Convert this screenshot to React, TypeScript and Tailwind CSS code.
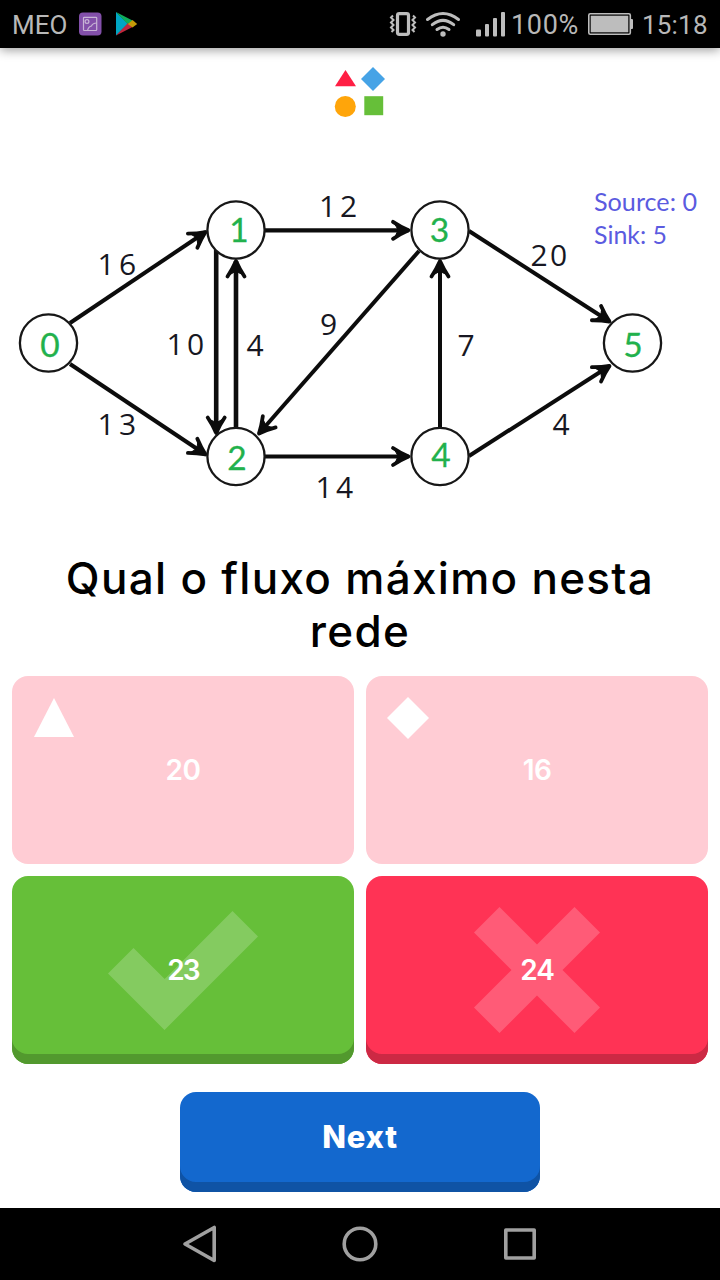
import React from "react";

type EdgeData = { from: [number, number]; to: [number, number]; width?: number };

const edges: EdgeData[] = [
  { from: [70, 323], to: [205.5, 232] },
  { from: [70, 364], to: [205.5, 454.5] },
  { from: [216.2, 250], to: [216.2, 433], width: 4.6 },
  { from: [236, 428], to: [236, 261], width: 4.6 },
  { from: [265, 230.3], to: [408.5, 230.3], width: 4.2 },
  { from: [265, 456.5], to: [408.5, 456.5], width: 4.2 },
  { from: [419, 251], to: [259, 433.5] },
  { from: [440, 428], to: [440, 261] },
  { from: [469, 231], to: [609.5, 321.5] },
  { from: [469, 456], to: [609.5, 366] },
];

const nodes = [
  { label: "0", x: 48.5, y: 343, tx: 50, base: 356.5 },
  { label: "1", x: 236, y: 230, tx: 239, base: 241.8 },
  { label: "2", x: 236, y: 456.5, tx: 237, base: 470 },
  { label: "3", x: 440, y: 230, tx: 439.5, base: 241.5 },
  { label: "4", x: 440, y: 456.5, tx: 441, base: 466.5 },
  { label: "5", x: 632.5, y: 343, tx: 633, base: 356.5 },
];

const capacities: { digits: string; xs: number[]; base: number }[] = [
  { digits: "16", xs: [106, 127.5], base: 274.5 },
  { digits: "13", xs: [106, 127.5], base: 434.5 },
  { digits: "10", xs: [175, 195.5], base: 354.5 },
  { digits: "4", xs: [255], base: 355.5 },
  { digits: "12", xs: [327.5, 348.5], base: 217 },
  { digits: "14", xs: [324, 344.5], base: 497.5 },
  { digits: "9", xs: [328.5], base: 334.5 },
  { digits: "7", xs: [466], base: 355.5 },
  { digits: "20", xs: [539, 558.5], base: 265.5 },
  { digits: "4", xs: [561], base: 434.5 },
];

function Edge({ from, to, width = 4 }: EdgeData) {
  const angle = (Math.atan2(to[1] - from[1], to[0] - from[0]) * 180) / Math.PI;
  return (
    <g stroke="#0c0c0c" fill="none" strokeLinecap="round" strokeLinejoin="round">
      <path d={`M${from[0]} ${from[1]}L${to[0]} ${to[1]}`} strokeWidth={width} strokeLinecap="butt" />
      <g transform={`translate(${to[0]} ${to[1]}) rotate(${angle})`}>
        <path d="M-15.5 -8.5Q-8 -3.5 0 0Q-8 3.5 -15.5 8.5" strokeWidth="3.8" />
        <path d="M-13 -5.5L0 0L-13 5.5L-10.5 0Z" fill="#0c0c0c" strokeWidth="1" />
      </g>
    </g>
  );
}

function Network() {
  return (
    <svg className="block h-[360px] w-[720px]" viewBox="0 170 720 360">
      {edges.map((e, i) => (
        <Edge key={i} {...e} />
      ))}
      {nodes.map((n) => (
        <g key={n.label}>
          <circle cx={n.x} cy={n.y} r="28.6" fill="#fff" stroke="#171717" strokeWidth="2.3" />
          <text
            x={n.tx}
            y={n.base}
            textAnchor="middle"
            fontFamily="Lato, sans-serif"
            fontSize="33.5"
            fill="#22b14c"
            stroke="#22b14c"
            strokeWidth="0.3"
          >
            {n.label}
          </text>
        </g>
      ))}
      {capacities.map((c, i) => (
        <text
          key={i}
          x={c.xs.join(" ")}
          y={c.base}
          textAnchor="middle"
          fontFamily="'Open Sans', sans-serif"
          fontSize="30"
          fill="#171722"
        >
          {c.digits}
        </text>
      ))}
      <g fontFamily="Lato, sans-serif" fontSize="25" fill="#5b5be0">
        <text x="594" y="211" textLength="103" lengthAdjust="spacingAndGlyphs">Source: 0</text>
        <text x="594" y="243.5" textLength="73" lengthAdjust="spacingAndGlyphs">Sink: 5</text>
      </g>
    </svg>
  );
}

function StatusBar() {
  return (
    <header className="relative flex h-12 shrink-0 items-center bg-black pl-3 font-['Roboto',sans-serif] text-[26px] leading-[48px] text-[#b8b8b8] shadow-[0_2px_10px_rgba(0,0,0,0.4)]">
      <span className="w-[66px] pt-0.5">MEO</span>
      <svg className="h-12 w-[70px]" viewBox="78 0 70 48">
        <rect x="79" y="12.5" width="22.5" height="23" rx="4" fill="#8350aa" />
        <g fill="none" stroke="#c8b5d6" strokeWidth="1.2">
          <rect x="83.5" y="17.3" width="13.2" height="13.2" rx="0.8" />
          <circle cx="87" cy="21.5" r="1.9" />
          <path d="M87.5 30.5Q88.5 26.5 91.5 26Q92.5 23.3 96.7 23" />
        </g>
        <path d="M116 12v23.5l12-11.7Z" fill="#00a6c4" />
        <path d="M116 12l16.5 8.5-4.5 4Z" fill="#0fad5a" />
        <path d="M116 35.5l16.5-8.5-4.5-4Z" fill="#c0283d" />
        <path d="M132.5 20l4.7 4-4.7 3.5-4.7-3.5Z" fill="#c59b08" />
      </svg>
      <svg className="ml-auto h-12 w-[122px]" viewBox="388 0 122 48" fill="none" stroke="#bdbdbd">
        <rect x="397.5" y="13.7" width="11" height="20.6" rx="1.8" strokeWidth="3.2" />
        <path d="M393 15.5l-2 2 2.5 2.5-2.5 2.5 2.5 2.5-2.5 2.5 2.5 2.5-2 2M413 15.5l2 2-2.5 2.5 2.5 2.5-2.5 2.5 2.5 2.5-2.5 2.5 2 2" strokeWidth="2" />
        <g strokeWidth="3" strokeLinecap="round">
          <path d="M427.5 19.5Q443 7.5 458.5 19.5M432.3 24.7Q443 16 453.7 24.7M437 29.5Q443 25 449 29.5" />
        </g>
        <circle cx="443" cy="34" r="2.7" fill="#bdbdbd" stroke="none" />
        <g fill="#bdbdbd" stroke="none">
          <rect x="476" y="29.5" width="5" height="7" rx="1" />
          <rect x="485" y="24" width="4" height="12.5" rx="1" />
          <rect x="493" y="18" width="4" height="18.5" rx="1" />
          <rect x="501" y="12" width="4" height="24.5" rx="1" />
        </g>
      </svg>
      <span className="w-[78px] pl-px pt-0.5 text-[27px] tracking-[0.7px]">100%</span>
      <svg className="h-12 w-[54px]" viewBox="588 0 54 48" fill="#bdbdbd">
        <rect x="588.8" y="13.8" width="41.5" height="20.5" rx="1.5" fill="none" stroke="#bdbdbd" strokeWidth="1.6" />
        <rect x="590.7" y="15.7" width="37.6" height="16.6" />
        <path d="M631 19h1q1 0 1 1v8q0 1-1 1h-1Z" />
      </svg>
      <span className="w-[78px] pt-0.5 tracking-[0.2px]">15:18</span>
    </header>
  );
}

type AnswerProps = { value: string; tone: string; children: React.ReactNode; spacing?: string };

function Answer({ value, tone, children, spacing = "" }: AnswerProps) {
  return (
    <button className={`grid h-[188px] w-[342px] place-items-center rounded-2xl text-[28px] font-semibold text-white ${tone}`}>
      <svg className="col-start-1 row-start-1 block h-[188px] w-[342px]" viewBox="0 0 342 188" fill="#fff">
        {children}
      </svg>
      <span className={`z-10 col-start-1 row-start-1 leading-none ${spacing}`}>{value}</span>
    </button>
  );
}

export default function App() {
  return (
    <div className="flex h-[1280px] w-[720px] flex-col overflow-hidden bg-white font-['Inter',sans-serif] text-black">
      <StatusBar />
      <main className="flex grow flex-col items-center">
        <svg className="mt-3 block h-[62px] w-20 shrink-0" viewBox="320 60 80 62">
          <path d="M345.5 70L356 86.3H335Z" fill="#ff1f44" />
          <path d="M373 67l12 12-12 12-12-12Z" fill="#46a3e6" />
          <circle cx="345.3" cy="106.5" r="10.5" fill="#ffa50a" />
          <rect x="364.3" y="96.2" width="18.9" height="19" fill="#66bf39" />
        </svg>
        <div className="mt-12 shrink-0">
          <Network />
        </div>
        <h1 className="mt-[22px] h-[124px] w-[640px] shrink-0 text-center text-[44px] font-medium leading-[53px] tracking-[1.3px]">
          Qual o fluxo máximo nesta rede
        </h1>
        <section className="grid grid-cols-2 gap-3">
          <Answer value="20" tone="bg-[#ffccd4]" spacing="tracking-[-0.5px]">
            <path d="M42 22L62 61H22Z" />
          </Answer>
          <Answer value="16" tone="bg-[#ffccd4]" spacing="tracking-[-0.5px]">
            <path d="M42 21L63 42 42 63 21 42Z" />
          </Answer>
          <Answer value="23" tone="bg-[#66bf39] shadow-[inset_0_-10px_0_#52992e]" spacing="tracking-[-2px]">
            <path fillOpacity="0.2" d="M121.5 72L152.7 103 220.5 35 246 60.5 152.5 154 96 97.5Z" />
          </Answer>
          <Answer value="24" tone="bg-[#ff3355] shadow-[inset_0_-10px_0_#cc2944]" spacing="tracking-[-1px]">
            <path fillOpacity="0.2" d="M133.5 31L171 68.5 208.5 31 234 56.5 196.5 94 234 131.5 208.5 157 171 119.5 133.5 157 108 131.5 145.5 94 108 56.5Z" />
          </Answer>
        </section>
        <button className="mt-7 flex h-[100px] w-[360px] shrink-0 items-center justify-center rounded-2xl bg-[#1368ce] pb-3 text-[31px] font-extrabold leading-none tracking-[0.8px] text-white shadow-[inset_0_-10px_0_#0f53a5]">
          Next
        </button>
      </main>
      <nav className="flex h-[72px] shrink-0 items-center justify-center bg-black">
        <svg className="h-[72px] w-[400px]" viewBox="160 1208 400 72" fill="none" stroke="#a0a0a0" strokeWidth="3.6" strokeLinejoin="round">
          <path d="M214.2 1227.5v33L185 1244Z" />
          <circle cx="360" cy="1244" r="15.8" />
          <rect x="505.8" y="1230" width="28.4" height="28" />
        </svg>
      </nav>
    </div>
  );
}
